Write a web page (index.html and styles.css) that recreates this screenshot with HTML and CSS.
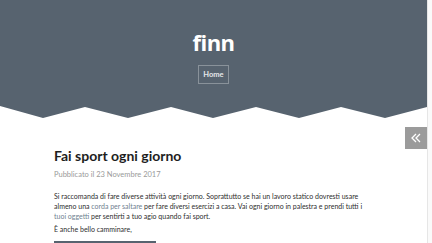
FILE: index.html
```html
<!DOCTYPE html>
<html lang="it">
<head>
<meta charset="utf-8">
<link rel="stylesheet" href="styles.css">
</head>
<body>
<div class="page">
  <div class="site">
    <header class="masthead">
      <div class="masthead-inner">
        <h1 class="site-title">finn</h1>
        <nav class="menu"><a class="menu-item" href="#">Home</a></nav>
      </div>
      <svg class="zigzag" width="427" height="12" viewBox="0 0 427 12" preserveAspectRatio="none">
        <polygon fill="#57636f" points="0,0 427,0 427,1 385,12 341,1 299,12 256,1 213,12 171,1 128,12 85,1 43,12 0,0"/>
      </svg>
      <button class="toggle" aria-label="Sidebar">
        <svg width="12" height="10" viewBox="0 0 12 10"><path d="M6 1 L2 5 L6 9 M10 1 L6 5 L10 9" fill="none" stroke="#fff" stroke-width="1.3"/></svg>
      </button>
    </header>
    <main class="content">
      <article class="post">
        <h2 class="post-title">Fai sport ogni giorno</h2>
        <div class="post-meta">Pubblicato il 23 Novembre 2017</div>
        <p class="para">Si raccomanda di fare diverse attività ogni giorno. Soprattutto se hai un lavoro statico dovresti usare almeno una <a href="#">corda per saltare</a> per fare diversi esercizi a casa. Vai ogni giorno in palestra e prendi tutti i <a href="#">tuoi oggetti</a> per sentirti a tuo agio quando fai sport.</p>
        <p class="para">È anche bello camminare,</p>
        <div class="more-bar"></div>
      </article>
    </main>
  </div>
  <div class="rail"></div>
</div>
</body>
</html>
```
FILE: styles.css
```css
html, body {
  margin: 0;
  padding: 0;
  background: #fff;
}
body {
  font-family: Lato, "Open Sans", sans-serif;
  color: #333;
  width: 432px;
  height: 243px;
  overflow: hidden;
}
.page {
  display: flex;
  height: 243px;
}
.site {
  width: 427px;
  flex: none;
}
.rail {
  flex: 1;
  border-left: 1px solid #e6e6e6;
  background: #fafafa;
}
.masthead {
  position: relative;
}
.masthead-inner {
  background: #57636f;
  height: 106px;
  display: flex;
  flex-direction: column;
  align-items: center;
  box-sizing: border-box;
  padding-top: 28px;
}
.zigzag {
  display: block;
}
.site-title {
  margin: 0;
  color: #fff;
  font-family: "Open Sans", sans-serif;
  font-size: 22px;
  font-weight: 700;
  line-height: 28px;
  letter-spacing: -0.6px;
}
.menu {
  margin-top: 9px;
}
.menu-item {
  display: block;
  border: 1px solid rgba(255, 255, 255, 0.3);
  color: #e4e7ea;
  font-size: 7.5px;
  font-weight: 700;
  text-decoration: none;
  padding: 0 4px;
  line-height: 17px;
}
.toggle {
  position: absolute;
  right: 0;
  top: 127px;
  width: 22px;
  height: 22px;
  border: 0;
  padding: 0;
  background: #9b9b9b;
  display: flex;
  align-items: center;
  justify-content: center;
}
.content {
  padding: 28px 54px 0 54px;
}
.post-title {
  margin: 0;
  font-size: 14px;
  font-weight: 700;
  color: #1e1e1e;
  line-height: 20px;
}
.post-meta {
  margin-top: 4px;
  font-size: 7.5px;
  color: #9a9a9a;
  line-height: 10px;
}
.para {
  margin: 11px 0 0 0;
  font-size: 7px;
  line-height: 10px;
  color: #2e2e2e;
}
.para + .para {
  margin-top: 3px;
}
.para a {
  color: #6f7f90;
  text-decoration: none;
}
.more-bar {
  margin-top: 7px;
  width: 102px;
  height: 8px;
  background: #57636f;
}
```
